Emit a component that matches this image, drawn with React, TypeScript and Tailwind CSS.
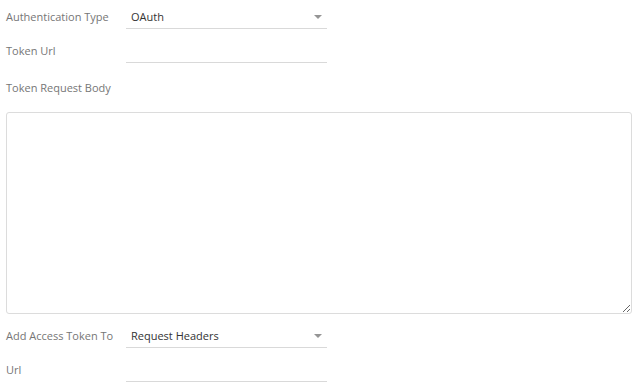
const Caret = () => (
  <svg width="8" height="4" viewBox="0 0 8 4" className="ml-auto mr-[5px]">
    <path d="M0 0h8L4 4z" fill="#959595" />
  </svg>
);

const Row = ({ label, value, select }: { label: string; value?: string; select?: boolean }) => (
  <div className="flex items-end h-[23px] mb-[11px]">
    <label className="w-[120px] shrink-0 self-center text-[#767676]">{label}</label>
    <div className="w-[201px] h-[23px] flex items-center border-b border-[#d9d9d9] pl-[5px] text-[#333]">
      <span>{value}</span>
      {select && <Caret />}
    </div>
  </div>
);

export default function App() {
  return (
    <div
      className="w-[637px] h-[388px] bg-white px-[6px] pt-[6px] text-[11px]"
      style={{ fontFamily: '"Open Sans", sans-serif' }}
    >
      <Row label="Authentication Type" value="OAuth" select />
      <Row label="Token Url" />
      <div className="h-[25px] pt-[3px] flex items-center text-[#767676]">Token Request Body</div>
      <textarea className="block w-[626px] h-[202px] mt-[13px] mb-[11px] border border-[#dcdcdc] rounded-[3px] outline-none resize-y" />
      <Row label="Add Access Token To" value="Request Headers" select />
      <Row label="Url" />
    </div>
  );
}
